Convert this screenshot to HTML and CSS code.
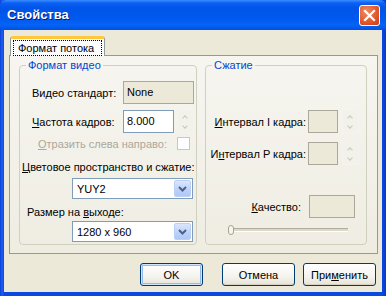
FILE: index.html
```html
<!DOCTYPE html>
<html lang="ru">
<head>
    <meta charset="UTF-8">
    <title>Свойства</title>
    <link rel="stylesheet" href="styles.css">
</head>
<body>
    <div class="window">
        <div class="titlebar">
            <span class="title">Свойства</span>
            <span class="close">
                <svg width="21" height="21" viewBox="0 0 21 21">
                    <path d="M6 6 L15 15 M15 6 L6 15" stroke="#fff" stroke-width="2.2" stroke-linecap="square"/>
                </svg>
            </span>
        </div>
        <div class="client">
            <div class="tabs">
                <div class="tab active"><span class="focus">Формат потока</span></div>
            </div>
            <div class="panel">
                <!-- формат видео -->
                <fieldset class="group video">
                    <legend>Формат видео</legend>
                    <div class="row row-std">
                        <label>Видео стандарт:</label>
                        <div class="box readonly wide">None</div>
                    </div>
                    <div class="row row-fps">
                        <label><u>Ч</u>астота кадров:</label>
                        <div class="box edit">8.000</div>
                        <div class="spin"><span class="up"></span><span class="down"></span></div>
                    </div>
                    <div class="row row-mirror">
                        <label class="disabled"><u>О</u>тразить слева направо:</label>
                        <span class="check"></span>
                    </div>
                    <div class="row row-caption cs">
                        <label><u>Ц</u>ветовое пространство и сжатие:</label>
                    </div>
                    <div class="row row-select first">
                        <div class="select"><span>YUY2</span><span class="drop"><svg width="9" height="6" viewBox="0 0 9 6"><path d="M1 1 L4.5 4.5 L8 1" fill="none" stroke="#4d6185" stroke-width="2"/></svg></span></div>
                    </div>
                    <div class="row row-caption size">
                        <label>Размер на <u>в</u>ыходе:</label>
                    </div>
                    <div class="row row-select">
                        <div class="select"><span>1280 x 960</span><span class="drop"><svg width="9" height="6" viewBox="0 0 9 6"><path d="M1 1 L4.5 4.5 L8 1" fill="none" stroke="#4d6185" stroke-width="2"/></svg></span></div>
                    </div>
                </fieldset>

                <!-- сжатие -->
                <fieldset class="group compress">
                    <legend>Сжатие</legend>
                    <div class="row row-int first">
                        <label><u>И</u>нтервал I кадра:</label>
                        <div class="box readonly small"></div>
                        <div class="spin"><span class="up"></span><span class="down"></span></div>
                    </div>
                    <div class="row row-int">
                        <label>И<u>н</u>тервал P кадра:</label>
                        <div class="box readonly small"></div>
                        <div class="spin"><span class="up"></span><span class="down"></span></div>
                    </div>
                    <div class="row row-quality">
                        <label><u>К</u>ачество:</label>
                        <div class="box readonly medium"></div>
                    </div>
                    <div class="row row-slider">
                        <div class="track"><span class="thumb"></span></div>
                    </div>
                </fieldset>
            </div>
            <div class="buttons">
                <button class="btn default ok">OK</button>
                <button class="btn">Отмена</button>
                <button class="btn">При<u>м</u>енить</button>
            </div>
        </div>
    </div>
</body>
</html>
```

FILE: styles.css
```css
html, body {
    margin: 0;
    padding: 0;
}
body {
    font-family: "Liberation Sans", Arial, sans-serif;
    font-size: 11px;
    color: #000;
    background: #0831d9;
}
.window {
    width: 386px;
    height: 296px;
    display: flex;
    flex-direction: column;
    background: linear-gradient(90deg, #0a3fd6 0, #1f5ff0 2px, #0a4ae0 4px, #0a4ae0 382px, #0b3bc8 386px);
    box-sizing: border-box;
}
.titlebar {
    height: 30px;
    flex: none;
    display: flex;
    align-items: center;
    justify-content: space-between;
    padding: 0 6px 0 7px;
    background: linear-gradient(#3c8dff 0, #0a61f2 3px, #0055e8 8px, #0058ee 18px, #0563f5 25px, #0150e0 30px);
    border-radius: 6px 6px 0 0;
}
.title {
    color: #fff;
    font-weight: bold;
    font-size: 13px;
    text-shadow: 1px 1px 0 #0a1a7a;
    padding-bottom: 1px;
}
.close {
    width: 21px;
    height: 21px;
    border: 1px solid #fff;
    border-radius: 3px;
    background: radial-gradient(circle at 35% 30%, #f08a64, #e2552a 60%, #c3401a);
    display: flex;
    box-sizing: border-box;
    margin-top: 1px;
}
.close svg {
    margin: -1px;
}
.client {
    flex: 1;
    margin: 0 4px 4px 4px;
    background: #ece9d8;
    padding: 6px 4px 6px 5px;
    display: flex;
    flex-direction: column;
}
.tabs {
    display: flex;
    padding-left: 1px;
    margin-bottom: -1px;
    position: relative;
    z-index: 1;
}
.tab {
    height: 20px;
    box-sizing: border-box;
    width: 95px;
    background: #fcfcfe;
    border: 1px solid #919b9c;
    border-bottom: none;
    border-top: 3px solid #ffc83c;
    border-radius: 3px 3px 0 0;
    padding: 1px 2px 0 2px;
}
.focus {
    display: block;
    border: 1px dotted #000;
    height: 14px;
    line-height: 14px;
    padding-left: 4px;
}
.panel {
    height: 199px;
    box-sizing: border-box;
    border: 1px solid #919b9c;
    background: linear-gradient(#f6f5f0, #efede2);
    padding: 3px 10px 0 9px;
    display: flex;
    gap: 8px;
}
.group {
    margin: 0;
    padding: 0 0 2px 0;
    border: 1px solid #d0d0bf;
    border-radius: 4px;
    height: 186px;
    box-sizing: border-box;
    min-width: 0;
}
.group legend {
    color: #0046d5;
    padding: 0 2px;
    margin-left: 6px;
    line-height: 13px;
}
.video {
    width: 178px;
    flex: none;
}
.compress {
    flex: 1;
}
.row {
    display: flex;
    align-items: center;
}
.disabled {
    color: #aca899;
}
.box {
    height: 23px;
    box-sizing: border-box;
    line-height: 21px;
    padding-left: 3px;
}
.readonly {
    border: 1px solid #aca899;
    background: #ece9d8;
}
.edit {
    border: 1px solid #7f9db9;
    background: #fff;
}
.spin {
    width: 17px;
    height: 23px;
    box-sizing: border-box;
    border: 1px solid #f4f3ee;
    background: #f2f1ea;
    display: flex;
    flex-direction: column;
    margin-left: 3px;
}
.spin span {
    flex: 1;
    position: relative;
}
.spin .up::after,
.spin .down::after {
    content: "";
    position: absolute;
    left: 5px;
    width: 3px;
    height: 3px;
    border-left: 1px solid #c9c7ba;
    border-top: 1px solid #c9c7ba;
}
.spin .up::after {
    top: 5px;
    transform: rotate(45deg);
}
.spin .down::after {
    top: 2px;
    transform: rotate(-135deg);
}
.row-std {
    margin-top: 9px;
    padding-left: 12px;
}
.row-std label,
.row-fps label {
    width: 91px;
}
.wide {
    width: 71px;
}
.row-fps {
    margin-top: 6px;
    padding-left: 12px;
}
.row-fps .edit {
    width: 51px;
}
.row-mirror {
    margin-top: 4px;
    padding-left: 18px;
    height: 13px;
}
.row-mirror label {
    width: 139px;
}
.check {
    width: 13px;
    height: 13px;
    box-sizing: border-box;
    border: 1px solid #cac8bb;
    background: #fff;
}
.row-caption {
    height: 13px;
}
.cs {
    margin-top: 10px;
    padding-left: 2px;
}
.size {
    margin-top: 6px;
    padding-left: 7px;
}
.row-select {
    margin-top: 3px;
    padding-left: 52px;
}
.row-select.first {
    margin-top: 5px;
}
.select {
    width: 121px;
    height: 21px;
    box-sizing: border-box;
    border: 1px solid #7f9db9;
    background: #fff;
    display: flex;
    justify-content: space-between;
    align-items: center;
    padding: 1px 1px 1px 4px;
}
.drop {
    width: 17px;
    height: 17px;
    box-sizing: border-box;
    border: 1px solid #bad0f7;
    border-radius: 2px;
    background: linear-gradient(#dbe6fd, #bcd0f9 60%, #b1c8f7);
    display: flex;
    align-items: center;
    justify-content: center;
}
.row-int {
    margin-top: 9px;
    padding-right: 7px;
}
.row-int.first {
    margin-top: 38px;
}
.row-int label,
.row-quality label {
    flex: 1;
    text-align: right;
    padding-right: 2px;
}
.small {
    width: 30px;
}
.row-int .spin {
    margin-left: 4px;
}
.row-quality {
    margin-top: 30px;
    padding-right: 11px;
}
.row-quality label {
    padding-right: 8px;
}
.medium {
    width: 46px;
}
.row-slider {
    margin-top: 10px;
    padding-left: 22px;
    padding-right: 18px;
}
.track {
    flex: 1;
    height: 2px;
    border-top: 1px solid #b0ad9e;
    border-bottom: 1px solid #fff;
    background: #dcd9cb;
    position: relative;
}
.thumb {
    position: absolute;
    left: 0;
    top: -4px;
    width: 4px;
    height: 8px;
    border: 1px solid #a6a494;
    border-radius: 3px;
    background: #f5f4ef;
}
.buttons {
    display: flex;
    justify-content: flex-end;
    gap: 8px;
    margin-top: 9px;
    padding-right: 2px;
}
.btn {
    font-family: "Liberation Sans", Arial, sans-serif;
    font-size: 11px;
    width: 73px;
    height: 23px;
    padding: 0;
    border: 1px solid #003c74;
    border-radius: 3px;
    background: linear-gradient(#ffffff, #f4f3ee 60%, #e6e3d6);
    box-shadow: inset 0 -1px 0 #d6d0c5;
    color: #000;
}
.default {
    box-shadow: inset 0 0 0 1px #cee7ff, inset 0 0 0 2px #98b8ea;
}
.ok {
    width: 63px;
    margin-right: 11px;
}
```
